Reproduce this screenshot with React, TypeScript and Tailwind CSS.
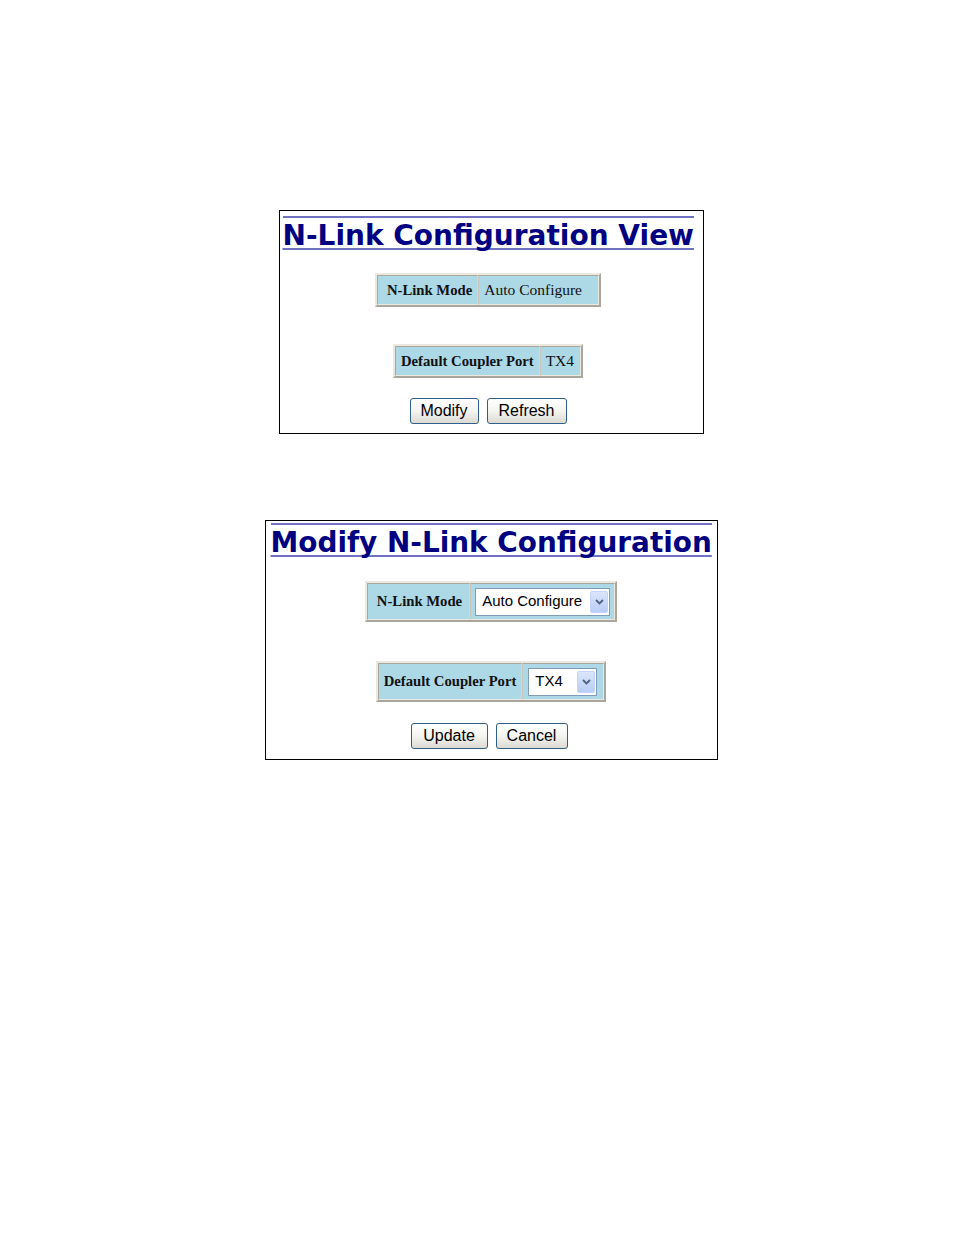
import React from "react";

const serif = "font-['Liberation_Serif','Times_New_Roman',serif]";
const sans = "font-['Liberation_Sans',Arial,sans-serif]";

function Title({ text, size, pad }: { text: string; size: string; pad: string }) {
  return (
    <div className={pad}>
      <div className="inline-block border-t-2 border-[#7272c4]">
        <h1
          className={`font-['DejaVu_Sans',Verdana,sans-serif] font-bold text-[#000080] ${size} leading-[36px] whitespace-nowrap underline decoration-[#7272c4] decoration-2 underline-offset-[3px] [text-decoration-skip-ink:none]`}
        >
          {text}
        </h1>
      </div>
    </div>
  );
}

type Pad = { l: string; v: string };

function InfoTable({ label, children, h, pad, shift }: { label: string; children: React.ReactNode; h: string; pad: Pad; shift?: string }) {
  return (
    <div className={`flex justify-center ${shift ?? ""}`}>
      <div className={`flex border-2 border-t-[#ebe9df] border-l-[#ebe9df] border-b-[#a9a79d] border-r-[#a9a79d] ${h}`}>
        <div className={`flex items-center bg-[#add8e6] ${pad.l} border border-t-[#a9a79d] border-l-[#a9a79d] border-b-[#ebe9df] border-r-[#d8d6cc] ${serif} font-bold text-[14.7px] text-[#111]`}>
          {label}
        </div>
        <div className={`flex items-center bg-[#add8e6] ${pad.v} border border-t-[#a9a79d] border-l-[#c9c7bd] border-b-[#ebe9df] border-r-[#ebe9df] ${serif} text-[15.5px] text-[#111]`}>
          {children}
        </div>
      </div>
    </div>
  );
}

function Select({ value, w }: { value: string; w: string }) {
  return (
    <div className={`flex items-center justify-between h-[28px] ${w} bg-white border border-[#7f9db9] pl-[6px] pr-[1px]`}>
      <span className={`${sans} text-[15px] text-black`}>{value}</span>
      <span className="flex items-center justify-center w-[18px] h-[22px] rounded-[2px] bg-gradient-to-b from-[#dbe6fb] to-[#b8ccf5] border border-[#c3d3fd]">
        <svg width="9" height="6" viewBox="0 0 9 6">
          <path d="M1 1 L4.5 4.5 L8 1" fill="none" stroke="#4d6185" strokeWidth="1.8" />
        </svg>
      </span>
    </div>
  );
}

function Btn({ label, w }: { label: string; w: string }) {
  return (
    <button
      className={`h-[26px] ${w} rounded-[3px] border border-[#2f5f8a] bg-gradient-to-b from-white via-[#f4f4f0] to-[#dcdad2] ${sans} text-[16px] leading-none text-black`}
    >
      {label}
    </button>
  );
}

export default function App() {
  return (
    <div className="min-h-[1235px] bg-white flex flex-col items-center pl-[28px] pt-[210px]">
      {/* View panel */}
      <div className="w-[425px] h-[224px] border border-black">
        <Title text="N-Link Configuration View" size="text-[28px]" pad="pl-[3px] pt-[5px]" />
        <div className="mt-[19px]">
          <InfoTable label="N-Link Mode" h="h-[34px]" shift="pr-[6px]" pad={{ l: "pl-[9px] pr-[5px]", v: "pl-[5px] pr-[16px]" }}>
            Auto Configure
          </InfoTable>
        </div>
        <div className="mt-[37px]">
          <InfoTable label="Default Coupler Port" h="h-[34px]" shift="pr-[6px]" pad={{ l: "px-[5px]", v: "pl-[5px] pr-[6px]" }}>
            TX4
          </InfoTable>
        </div>
        <div className="mt-[20px] pr-[6px] flex justify-center gap-[8px]">
          <Btn label="Modify" w="w-[69px]" />
          <Btn label="Refresh" w="w-[80px]" />
        </div>
      </div>

      {/* Modify panel */}
      <div className="mt-[86px] w-[453px] h-[240px] border border-black">
        <Title text="Modify N-Link Configuration" size="text-[27.9px]" pad="pl-[5px] pt-[2px]" />
        <div className="mt-[20px]">
          <InfoTable label="N-Link Mode" h="h-[41px]" pad={{ l: "pl-[9px] pr-[7px]", v: "pl-[4px] pr-[4px]" }}>
            <Select value="Auto Configure" w="w-[135px]" />
          </InfoTable>
        </div>
        <div className="mt-[39px]">
          <InfoTable label="Default Coupler Port" h="h-[41px]" pad={{ l: "px-[5px]", v: "pl-[5px] pr-[6px]" }}>
            <Select value="TX4" w="w-[69px]" />
          </InfoTable>
        </div>
        <div className="mt-[21px] pr-[4px] flex justify-center gap-[8px]">
          <Btn label="Update" w="w-[77px]" />
          <Btn label="Cancel" w="w-[72px]" />
        </div>
      </div>
    </div>
  );
}
